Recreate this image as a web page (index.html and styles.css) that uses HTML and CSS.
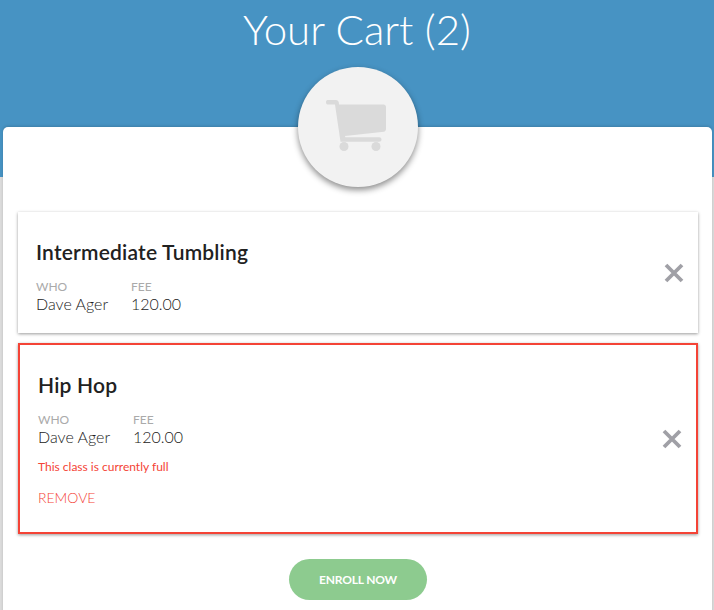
FILE: index.html
```html
<!DOCTYPE html>
<html lang="en">
<head>
  <meta charset="UTF-8">
  <meta name="viewport" content="width=device-width, initial-scale=1.0">
  <title>Your Cart</title>
  <link rel="stylesheet" href="styles.css">
</head>
<body>

<div class="header">
  <h1>Your Cart (2)</h1>
</div>

<div class="sheet">
  <div class="cart-badge">
    <svg width="60" height="51" viewBox="0 0 60 51">
      <path class="cart-fill" d="M1.5 0H10C11.5 0 12.5 1 12.8 2.3L13 4.6H57.5C59 4.6 60 5.6 60 7V29C60 30.5 59 31.5 57.8 31.7L19 36L19.3 37.3H53C54.5 37.3 55.5 38.2 55.5 39.5C55.5 40.8 54.5 41.8 53 41.8H14.5L9 4.4H1.5C.5 4.4 0 3 0 2.2C0 1 .5 0 1.5 0Z"/>
      <circle class="cart-fill" cx="18" cy="46.5" r="4.5"/>
      <circle class="cart-fill" cx="50" cy="46.5" r="4.5"/>
    </svg>
  </div>

  <div class="cart-item">
    <div class="item-info">
      <h2>Intermediate Tumbling</h2>
      <div class="item-meta">
        <div class="meta-who">
          <div class="meta-label">WHO</div>
          <div class="meta-value">Dave Ager</div>
        </div>
        <div>
          <div class="meta-label">FEE</div>
          <div class="meta-value">120.00</div>
        </div>
      </div>
    </div>
    <svg class="close-icon" width="20" height="20" viewBox="0 0 20 20">
      <path d="M2 2L18 18M18 2L2 18"/>
    </svg>
  </div>

  <div class="cart-item error">
    <div class="item-info">
      <h2>Hip Hop</h2>
      <div class="item-meta">
        <div class="meta-who">
          <div class="meta-label">WHO</div>
          <div class="meta-value">Dave Ager</div>
        </div>
        <div>
          <div class="meta-label">FEE</div>
          <div class="meta-value">120.00</div>
        </div>
      </div>
      <div class="item-error">This class is currently full</div>
      <div class="item-remove">REMOVE</div>
    </div>
    <svg class="close-icon" width="20" height="20" viewBox="0 0 20 20">
      <path d="M2 2L18 18M18 2L2 18"/>
    </svg>
  </div>

  <div class="actions">
    <button class="enroll-btn">ENROLL NOW</button>
  </div>
</div>

</body>
</html>
```

FILE: styles.css
```css
body {
  font-family: Lato, sans-serif;
  margin: 0;
  padding: 0;
  background-color: #dcdcdc;
  color: #212121;
  height: 610px;
  overflow: hidden;
}
.header {
  height: 177px;
  background-color: #4793c3;
  text-align: center;
}
.header h1 {
  margin: 0;
  padding-top: 3px;
  color: #fff;
  font-size: 42px;
  line-height: 52px;
  font-weight: 300;
}
.sheet {
  position: relative;
  margin: -50px 2px 0 3px;
  padding: 85px 14px 30px 15px;
  background-color: #fff;
  border-radius: 5px 5px 0 0;
  box-shadow: 0 -1px 3px rgba(0,0,0,0.15);
}
.cart-badge {
  position: absolute;
  top: -60px;
  left: 295px;
  width: 120px;
  height: 120px;
  display: flex;
  align-items: center;
  justify-content: center;
  border-radius: 50%;
  background-color: #f2f2f2;
  box-shadow: 0 3px 6px rgba(0,0,0,0.45);
}
.cart-badge svg {
  margin: 0 4px 3px 0;
}
.cart-fill {
  fill: #dadada;
}
.cart-item {
  display: flex;
  align-items: center;
  justify-content: space-between;
  padding-left: 18px;
  padding-right: 14px;
  margin-bottom: 10px;
  background-color: #fff;
  box-shadow: 0 1px 3px rgba(0,0,0,0.4);
}
.item-info {
  padding: 27px 0 19px;
}
.cart-item.error {
  border: 2px solid #f44336;
}
.cart-item.error .item-info {
  padding-bottom: 26px;
}
h2 {
  margin: 0 0 15px;
  font-size: 21px;
  line-height: 26px;
  font-weight: 600;
  letter-spacing: 0.2px;
}
.item-meta {
  display: flex;
}
.meta-who {
  width: 95px;
}
.meta-label {
  color: #aaa;
  font-size: 12px;
  line-height: 14px;
}
.meta-value {
  font-size: 16px;
  font-weight: 300;
  line-height: 20px;
}
.item-error {
  margin-top: 12px;
  color: #f44336;
  font-size: 12px;
  line-height: 16px;
}
.item-remove {
  margin-top: 14px;
  color: #f44336;
  font-size: 14px;
  font-weight: 300;
  line-height: 17px;
}
.close-icon path {
  fill: none;
  stroke: #a0a0a6;
  stroke-width: 3.8;
}
.actions {
  display: flex;
  justify-content: center;
  padding-top: 15px;
}
.enroll-btn {
  width: 138px;
  height: 41px;
  border: none;
  border-radius: 21px;
  background-color: #8dcb8f;
  color: #fff;
  font-family: Lato, sans-serif;
  font-size: 12px;
  font-weight: 700;
  letter-spacing: -0.2px;
  cursor: pointer;
}
```
